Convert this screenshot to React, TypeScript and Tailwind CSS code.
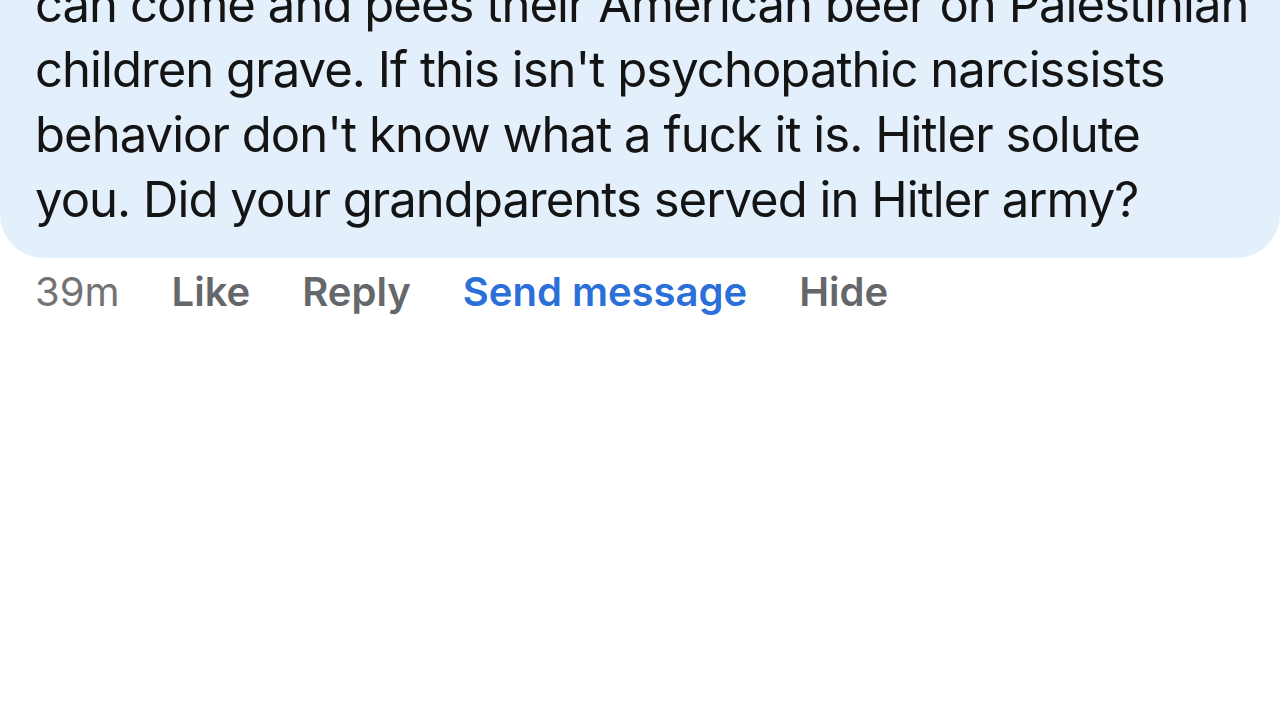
export default function App() {
  const lines = [
    "can come and pees their American beer on Palestinian",
    "children grave. If this isn't psychopathic narcissists",
    "behavior don't know what a fuck it is. Hitler solute",
    "you. Did your grandparents served in Hitler army?",
  ];
  return (
    <div
      className="w-[1280px] h-[720px] bg-white overflow-hidden"
      style={{ fontFamily: 'Inter, "Noto Sans", sans-serif' }}
    >
      <div className="mt-[-28px] bg-[#e3effb] rounded-b-[44px] pl-[35px] pr-[10px] pb-[26px]">
        {lines.map((l) => (
          <p
            key={l}
            className="whitespace-nowrap text-[49px] leading-[65px] text-[#141414] tracking-[-0.95px]"
          >
            {l}
          </p>
        ))}
      </div>
      <div className="flex items-center gap-[52px] pl-[35px] pt-[10px] text-[40px] leading-[48px]">
        <span className="text-[#737373]">39m</span>
        <span className="font-semibold text-[#65676b]">Like</span>
        <span className="font-semibold text-[#65676b]">Reply</span>
        <span className="font-semibold text-[#2b6fd9]">Send message</span>
        <span className="font-semibold text-[#65676b]">Hide</span>
      </div>
    </div>
  );
}
